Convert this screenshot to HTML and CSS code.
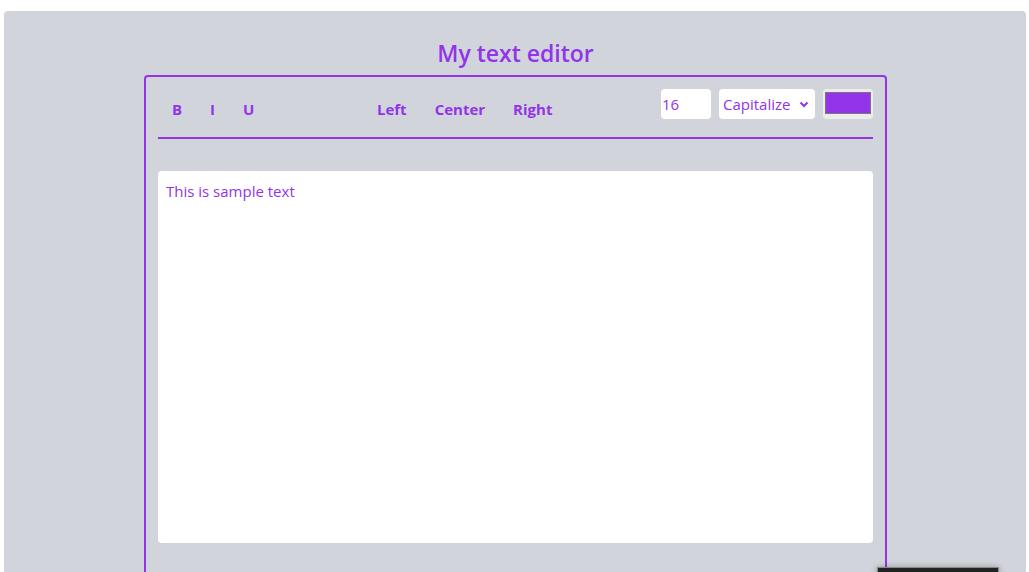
FILE: index.html
```html
<!DOCTYPE html>
<html lang="en">
<head>
<meta charset="utf-8">
<title>My text editor</title>
<link rel="stylesheet" href="styles.css">
</head>
<body>
<div class="page">
  <h1 class="title">My text editor</h1>
  <div class="editor">
    <div class="toolbar">
      <div class="group">
        <button class="btn">B</button>
        <button class="btn">I</button>
        <button class="btn">U</button>
      </div>
      <div class="group">
        <button class="btn">Left</button>
        <button class="btn">Center</button>
        <button class="btn">Right</button>
      </div>
      <div class="controls">
        <div class="num">16</div>
        <div class="select">
          <span>Capitalize</span>
          <svg class="chev" width="10" height="7" viewBox="0 0 10 7"><path d="M1.5 1.5 L5 5 L8.5 1.5" fill="none" stroke="#9333ea" stroke-width="2"/></svg>
        </div>
        <div class="color"><div class="swatch"></div></div>
      </div>
    </div>
    <div class="area">This is sample text</div>
  </div>
</div>
<div class="toast"></div>
</body>
</html>
```
FILE: styles.css
```css
html, body {
  margin: 0;
  padding: 0;
  background: #ffffff;
  overflow: hidden;
  height: 572px;
}
body {
  font-family: "Open Sans", "Noto Sans", sans-serif;
  color: #9333ea;
}
.page {
  margin: 11px 3px 0 4px;
  background: #d1d5db;
  border-radius: 4px;
  height: 620px;
  padding: 1px 1px 0 2px;
}
.title {
  margin: 26px 0 0 0;
  height: 37px;
  text-align: center;
  font-size: 23px;
  font-weight: 600;
  line-height: 30px;
}
.editor {
  width: 743px;
  box-sizing: border-box;
  margin: 0 auto;
  border: 2px solid #9333ea;
  border-radius: 4px;
  padding: 0 12px;
  height: 560px;
}
.toolbar {
  display: flex;
  justify-content: space-between;
  align-items: flex-start;
  padding: 12px 0 8px 0;
  border-bottom: 2px solid #9333ea;
}
.group {
  display: flex;
}
.btn {
  background: none;
  border: none;
  font-family: inherit;
  color: #9333ea;
  font-weight: 700;
  font-size: 15px;
  height: 40px;
  padding: 0 14px;
  line-height: 40px;
}
.controls {
  display: flex;
  gap: 8px;
}
.num {
  width: 50px;
  height: 30px;
  box-sizing: border-box;
  background: #fff;
  border-radius: 4px;
  padding-left: 1px;
  font-size: 15px;
  line-height: 30px;
}
.select {
  width: 96px;
  height: 30px;
  box-sizing: border-box;
  background: #fff;
  border-radius: 4px;
  padding: 0 6px 0 4px;
  display: flex;
  align-items: center;
  justify-content: space-between;
  font-size: 15px;
}
.color {
  width: 50px;
  height: 30px;
  box-sizing: border-box;
  background: #ececec;
  border-radius: 4px;
  padding: 3px 2px 5px 2px;
}
.swatch {
  height: 100%;
  background: #9333ea;
  border: 1px solid #777;
  box-sizing: border-box;
}
.area {
  margin-top: 32px;
  background: #fff;
  border-radius: 4px;
  height: 372px;
  box-sizing: border-box;
  padding: 9px 8px;
  font-size: 15px;
  line-height: 22px;
}
.toast {
  position: fixed;
  left: 877px;
  top: 567px;
  width: 120px;
  height: 20px;
  background: #222;
  border: 1px solid #888;
  box-shadow: 0 0 6px rgba(0,0,0,0.3);
}
```
